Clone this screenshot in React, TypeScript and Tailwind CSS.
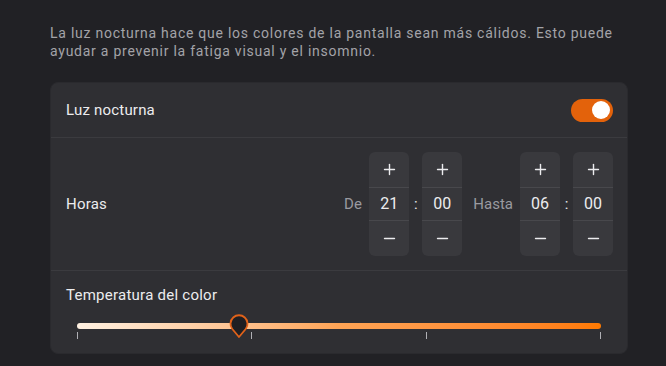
import { useState } from "react";
import { Minus, Plus } from "lucide-react";

function Spin({ value }: { value: string }) {
  return (
    <div className="flex w-[40px] flex-col overflow-hidden rounded-md bg-[#39393d] text-[#ececee]">
      <button className="flex h-[35px] items-center justify-center">
        <Plus size={17} strokeWidth={2} />
      </button>
      <div className="flex h-[34px] items-center justify-center border-y border-[#48484c] bg-[#37373b] text-[16px]">
        {value}
      </div>
      <button className="flex h-[35px] items-center justify-center">
        <Minus size={17} strokeWidth={2} />
      </button>
    </div>
  );
}

export default function App() {
  const [on, setOn] = useState(true);
  const temp = 31;

  return (
    <main className="min-h-screen bg-[#212125] font-['Roboto',sans-serif] text-[#ececee]">
      <div className="pl-[50px] pr-[38px] pt-[24px]">
        <p className="text-[14px] leading-[18px] tracking-[0.75px] text-[#a3a3a8]">
          La luz nocturna hace que los colores de la pantalla sean más cálidos. Esto puede
          ayudar a prevenir la fatiga visual y el insomnio.
        </p>

        <div className="mt-[22px] rounded-lg border border-[#2a2a2e] bg-[#2f2f33]">
          <div className="flex h-[55px] items-center justify-between border-b border-[#3b3b3f] pl-[15px] pr-[14px]">
            <span className="text-[15px] tracking-[0.2px]">Luz nocturna</span>
            <button
              onClick={() => setOn(!on)}
              className={`flex h-[23px] w-[42px] items-center rounded-full px-[3px] ${on ? "justify-end bg-[#e3620b]" : "justify-start bg-[#55555a]"}`}
            >
              <span className="h-[18px] w-[18px] rounded-full bg-white" />
            </button>
          </div>

          <div className="flex h-[133px] items-center justify-between border-b border-[#3b3b3f] pl-[15px] pr-[14px]">
            <span className="text-[15px] tracking-[0.2px]">Horas</span>
            <div className="flex items-center">
              <span className="mr-[7px] text-[15px] tracking-[0.3px] text-[#9a9aa0]">De</span>
              <Spin value="21" />
              <span className="w-[13px] text-center text-[15px]">:</span>
              <Spin value="00" />
              <span className="ml-[11px] mr-[7px] text-[15px] text-[#9a9aa0]">Hasta</span>
              <Spin value="06" />
              <span className="w-[13px] text-center text-[15px]">:</span>
              <Spin value="00" />
            </div>
          </div>

          <div className="px-[15px] pb-[14px] pt-[12px]">
            <span className="text-[15px] tracking-[0.25px]">Temperatura del color</span>
            <div className="relative mx-[11px] mt-[8px] h-[24px]">
              <div className="absolute left-0 right-0 top-[8px] h-[6px] rounded-full bg-gradient-to-r from-[#fff1e2] via-[#ffa455] to-[#ff7a00]" />
              <div className="absolute left-0 right-0 top-[17px] flex justify-between">
                <span className="h-[7px] w-px bg-[#b0b0b5]" />
                <span className="h-[7px] w-px bg-[#b0b0b5]" />
                <span className="h-[7px] w-px bg-[#b0b0b5]" />
                <span className="h-[7px] w-px bg-[#b0b0b5]" />
              </div>
              <svg
                className="absolute top-[-2px]"
                style={{ left: `calc(${temp}% - 11px)` }}
                width="22"
                height="26"
                viewBox="0 0 22 26"
              >
                <path
                  d="M11 24 L4.3 16 A8.5 8.5 0 1 1 17.7 16 Z"
                  fill="#1f1f23"
                  stroke="#e0621a"
                  strokeWidth="1.8"
                  strokeLinejoin="round"
                />
              </svg>
            </div>
          </div>
        </div>
      </div>
    </main>
  );
}
